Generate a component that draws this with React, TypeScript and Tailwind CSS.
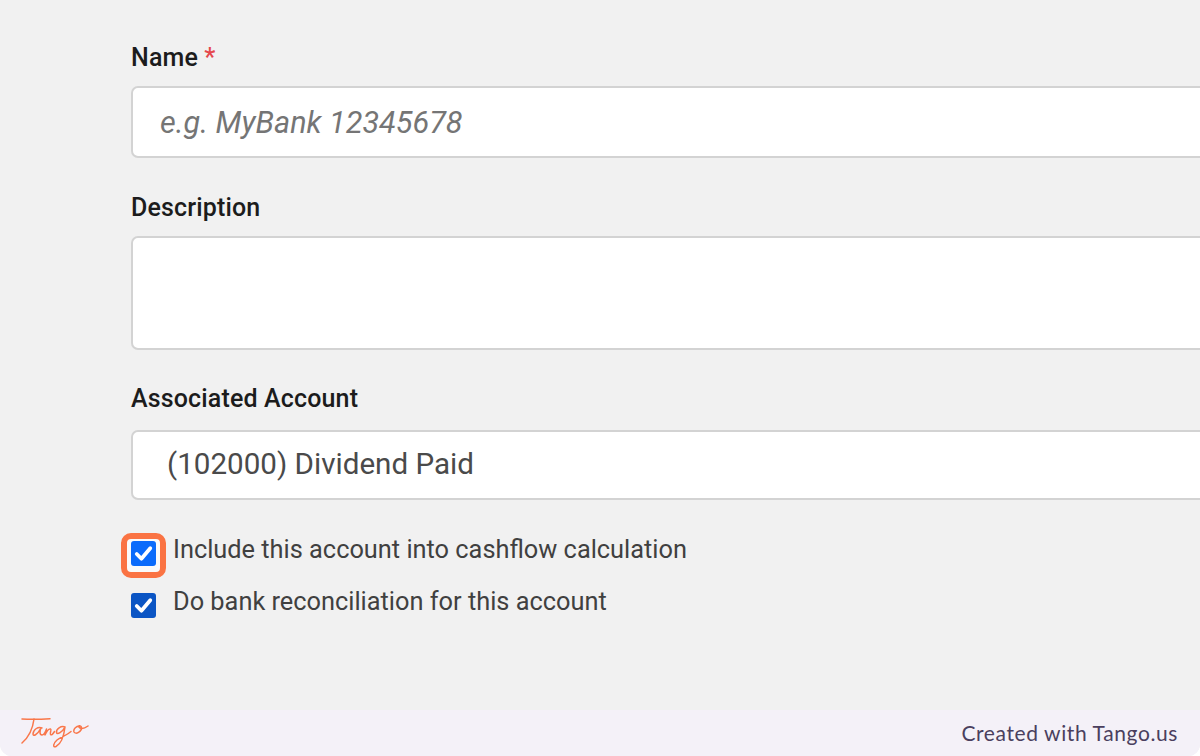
const labelClass = "text-[25px] leading-[28px] font-medium text-[#1c1c1c] tracking-[0.15px]";
const boxClass = "w-[1100px] rounded-[7px] border-2 border-[#d3d3d3] bg-white";

function CheckIcon() {
  return (
    <svg viewBox="0 0 24 24" className="h-full w-full">
      <path d="M5.500 12.500l4.500 4.500 8.500-10" fill="none" stroke="#fff" strokeWidth="3.600" strokeLinecap="round" strokeLinejoin="round" />
    </svg>
  );
}

function TangoLogo() {
  return (
    <svg viewBox="0 0 68 32" className="h-[32px] w-[68px]" fill="none" stroke="#f9774b" strokeWidth="1.500" strokeLinecap="round" strokeLinejoin="round">
      <path d="M1 2c8 .5 18 .4 28-.3" />
      <path d="M13 2C12 10 8 20 1 26" />
      <path d="M21 11c-4-2-9 2-9 6 0 2.500 4 1.500 8-6-1.500 3-1.500 7 1 7 2 0 3.500-3 4.500-6-.8 2.500-1.500 5-1.500 6 1.500-3.500 3.500-6.500 5.500-6 1.500.5-1 4 0 5.500 1 1 2.500-.5 4-3" />
      <path d="M44 10c-4-1.500-9 2-8.500 5.500.5 2.500 6-.5 8.500-5.500-1 8-4 17-9 19.500-3.500 1.500-3-3 1-6.500 4-3 10-5 14-8.500" />
      <path d="M59 9c-3.500-.5-7 3-6 6 1.500 3 8-.5 7.500-4.500-.2-1.500-2.500-2.500-3-1 2 3 5 2.500 9.500-.5" />
    </svg>
  );
}

export default function App() {
  return (
    <div className="flex h-[756px] w-[1200px] flex-col overflow-hidden rounded-b-[12px] bg-[#f1f1f1] font-['Roboto',sans-serif]">
      <main className="flex-1 overflow-hidden pl-[131px] pt-[44px]">
        <label className={`block ${labelClass}`}>
          Name <span className="text-[#e5484d]">*</span>
        </label>
        <div className={`mt-[14px] flex h-[72px] items-center pl-[27px] pt-[2px] ${boxClass}`}>
          <span className="text-[30.6px] italic text-[#757575]">e.g. MyBank 12345678</span>
        </div>

        <label className={`mt-[36px] block ${labelClass}`}>Description</label>
        <div className={`mt-[14px] h-[114px] ${boxClass}`} />

        <label className={`mt-[35px] block ${labelClass}`}>Associated Account</label>
        <div className={`mt-[17px] flex h-[70px] items-center pb-[1px] pl-[34px] ${boxClass}`}>
          <span className="text-[29.6px] text-[#4a4a4a]">(102000) Dividend Paid</span>
        </div>

        <div className="mt-[32px] flex h-[34px] items-start">
          <div className="relative mt-[9px] h-[25px] w-[25px] rounded-[3px] bg-[#0b6bfb]">
            <div className="absolute -top-[8px] -bottom-[12px] -left-[10px] -right-[10px] rounded-[10px] border-[6px] border-[#fa7343] bg-[#fafafa]" />
            <div className="absolute inset-0 rounded-[3px] bg-[#0b6bfb]">
              <CheckIcon />
            </div>
          </div>
          <span className="ml-[17px] text-[25.35px] leading-[34px] text-[#404040]">Include this account into cashflow calculation</span>
        </div>
        <div className="mt-[18px] flex h-[34px] items-start">
          <div className="mt-[9px] h-[25px] w-[25px] rounded-[3px] bg-[#0b55c4]">
            <CheckIcon />
          </div>
          <span className="ml-[17px] text-[25.35px] leading-[34px] text-[#404040]">Do bank reconciliation for this account</span>
        </div>
      </main>

      <footer className="flex h-[46px] items-center justify-between bg-[#f4f1f8] pl-[21px] pr-[22px]">
        <TangoLogo />
        <span className="font-['Lato',sans-serif] text-[21px] tracking-[0.6px] text-[#4a3f5e]">Created with Tango.us</span>
      </footer>
    </div>
  );
}
